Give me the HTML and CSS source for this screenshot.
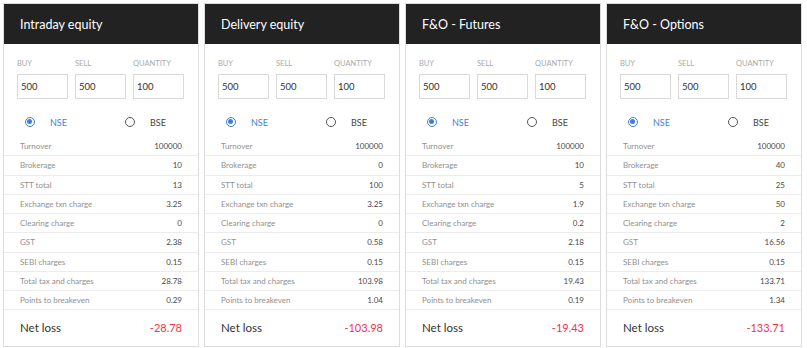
FILE: index.html
```html
<!DOCTYPE html>
<html>
<head>
<meta charset="utf-8">
<link rel="stylesheet" href="styles.css">
</head>
<body>
<div class="cards">
  <div class="card">
    <div class="card-head">Intraday equity</div>
    <div class="inputs">
      <label class="field"><span class="flabel">BUY</span><span class="fbox">500</span></label>
      <label class="field"><span class="flabel">SELL</span><span class="fbox">500</span></label>
      <label class="field"><span class="flabel">QUANTITY</span><span class="fbox">100</span></label>
    </div>
    <div class="radios">
      <div class="radio on"><span class="dot"></span><span class="rtext">NSE</span></div>
      <div class="radio"><span class="dot"></span><span class="rtext">BSE</span></div>
    </div>
    <div class="rows">
      <div class="row"><span>Turnover</span><span class="val">100000</span></div>
      <div class="row"><span>Brokerage</span><span class="val">10</span></div>
      <div class="row"><span>STT total</span><span class="val">13</span></div>
      <div class="row"><span>Exchange txn charge</span><span class="val">3.25</span></div>
      <div class="row"><span>Clearing charge</span><span class="val">0</span></div>
      <div class="row"><span>GST</span><span class="val">2.38</span></div>
      <div class="row"><span>SEBI charges</span><span class="val">0.15</span></div>
      <div class="row"><span>Total tax and charges</span><span class="val">28.78</span></div>
      <div class="row"><span>Points to breakeven</span><span class="val">0.29</span></div>
    </div>
    <div class="net"><span>Net loss</span><span class="netval">-28.78</span></div>
  </div>

  <div class="card">
    <div class="card-head">Delivery equity</div>
    <div class="inputs">
      <label class="field"><span class="flabel">BUY</span><span class="fbox">500</span></label>
      <label class="field"><span class="flabel">SELL</span><span class="fbox">500</span></label>
      <label class="field"><span class="flabel">QUANTITY</span><span class="fbox">100</span></label>
    </div>
    <div class="radios">
      <div class="radio on"><span class="dot"></span><span class="rtext">NSE</span></div>
      <div class="radio"><span class="dot"></span><span class="rtext">BSE</span></div>
    </div>
    <div class="rows">
      <div class="row"><span>Turnover</span><span class="val">100000</span></div>
      <div class="row"><span>Brokerage</span><span class="val">0</span></div>
      <div class="row"><span>STT total</span><span class="val">100</span></div>
      <div class="row"><span>Exchange txn charge</span><span class="val">3.25</span></div>
      <div class="row"><span>Clearing charge</span><span class="val">0</span></div>
      <div class="row"><span>GST</span><span class="val">0.58</span></div>
      <div class="row"><span>SEBI charges</span><span class="val">0.15</span></div>
      <div class="row"><span>Total tax and charges</span><span class="val">103.98</span></div>
      <div class="row"><span>Points to breakeven</span><span class="val">1.04</span></div>
    </div>
    <div class="net"><span>Net loss</span><span class="netval">-103.98</span></div>
  </div>

  <div class="card">
    <div class="card-head">F&amp;O - Futures</div>
    <div class="inputs">
      <label class="field"><span class="flabel">BUY</span><span class="fbox">500</span></label>
      <label class="field"><span class="flabel">SELL</span><span class="fbox">500</span></label>
      <label class="field"><span class="flabel">QUANTITY</span><span class="fbox">100</span></label>
    </div>
    <div class="radios">
      <div class="radio on"><span class="dot"></span><span class="rtext">NSE</span></div>
      <div class="radio"><span class="dot"></span><span class="rtext">BSE</span></div>
    </div>
    <div class="rows">
      <div class="row"><span>Turnover</span><span class="val">100000</span></div>
      <div class="row"><span>Brokerage</span><span class="val">10</span></div>
      <div class="row"><span>STT total</span><span class="val">5</span></div>
      <div class="row"><span>Exchange txn charge</span><span class="val">1.9</span></div>
      <div class="row"><span>Clearing charge</span><span class="val">0.2</span></div>
      <div class="row"><span>GST</span><span class="val">2.18</span></div>
      <div class="row"><span>SEBI charges</span><span class="val">0.15</span></div>
      <div class="row"><span>Total tax and charges</span><span class="val">19.43</span></div>
      <div class="row"><span>Points to breakeven</span><span class="val">0.19</span></div>
    </div>
    <div class="net"><span>Net loss</span><span class="netval">-19.43</span></div>
  </div>

  <div class="card">
    <div class="card-head">F&amp;O - Options</div>
    <div class="inputs">
      <label class="field"><span class="flabel">BUY</span><span class="fbox">500</span></label>
      <label class="field"><span class="flabel">SELL</span><span class="fbox">500</span></label>
      <label class="field"><span class="flabel">QUANTITY</span><span class="fbox">100</span></label>
    </div>
    <div class="radios">
      <div class="radio on"><span class="dot"></span><span class="rtext">NSE</span></div>
      <div class="radio"><span class="dot"></span><span class="rtext">BSE</span></div>
    </div>
    <div class="rows">
      <div class="row"><span>Turnover</span><span class="val">100000</span></div>
      <div class="row"><span>Brokerage</span><span class="val">40</span></div>
      <div class="row"><span>STT total</span><span class="val">25</span></div>
      <div class="row"><span>Exchange txn charge</span><span class="val">50</span></div>
      <div class="row"><span>Clearing charge</span><span class="val">2</span></div>
      <div class="row"><span>GST</span><span class="val">16.56</span></div>
      <div class="row"><span>SEBI charges</span><span class="val">0.15</span></div>
      <div class="row"><span>Total tax and charges</span><span class="val">133.71</span></div>
      <div class="row"><span>Points to breakeven</span><span class="val">1.34</span></div>
    </div>
    <div class="net"><span>Net loss</span><span class="netval">-133.71</span></div>
  </div>
</div>
</body>
</html>
```

FILE: styles.css
```css
* { box-sizing: border-box; }
html, body { margin: 0; padding: 0; background: #fff; }
body {
  font-family: Lato, "Open Sans", sans-serif;
  padding: 3px 0 0 3px;
  color: #333;
}
.cards {
  display: flex;
  gap: 5px;
}
.card {
  width: 196px;
  height: 344px;
  border: 1px solid #dcdcdc;
  display: flex;
  flex-direction: column;
  background: #fff;
}
.card-head {
  height: 40px;
  flex: none;
  background: #222222;
  color: #fff;
  font-size: 12.5px;
  line-height: 36px;
  padding: 3px 0 0 16px;
}
.inputs {
  display: grid;
  grid-template-columns: 51px 51px 51px;
  column-gap: 7px;
  padding: 15px 13px 0 13px;
}
.field {
  display: flex;
  flex-direction: column;
  gap: 5px;
}
.flabel {
  font-size: 7.5px;
  color: #aaa;
  line-height: 10px;
  height: 10px;
}
.fbox {
  height: 25px;
  border: 1px solid #d9d9d9;
  font-size: 9.5px;
  color: #333;
  line-height: 23px;
  padding-left: 3px;
}
.radios {
  display: flex;
  height: 38px;
  flex: none;
  align-items: center;
  padding: 8px 0 0 21px;
}
.radio {
  display: flex;
  align-items: center;
  flex: none;
  width: 100px;
  font-size: 9px;
  color: #444;
}
.dot {
  width: 10px;
  height: 10px;
  border-radius: 50%;
  border: 1.3px solid #555;
  margin-right: 15px;
  position: relative;
}
.radio.on .dot {
  border-color: #3f7fd8;
}
.radio.on .dot::after {
  content: "";
  position: absolute;
  left: 1.2px;
  top: 1.2px;
  width: 5px;
  height: 5px;
  border-radius: 50%;
  background: #3f7fd8;
}
.radio.on .rtext { color: #3f7fd8; }
.rows { display: flex; flex-direction: column; }
.row {
  display: flex;
  justify-content: space-between;
  align-items: center;
  height: 19.25px;
  padding: 0 16px;
  font-size: 8px;
  color: #909090;
  border-bottom: 1px solid #ececec;
}
.row .val { color: #4a4a4a; }
.net {
  flex: 1;
  display: flex;
  justify-content: space-between;
  align-items: center;
  padding: 0 16px 2px 16px;
  font-size: 11.5px;
  color: #333;
}
.netval { color: #f0344a; font-size: 11px; }
```
